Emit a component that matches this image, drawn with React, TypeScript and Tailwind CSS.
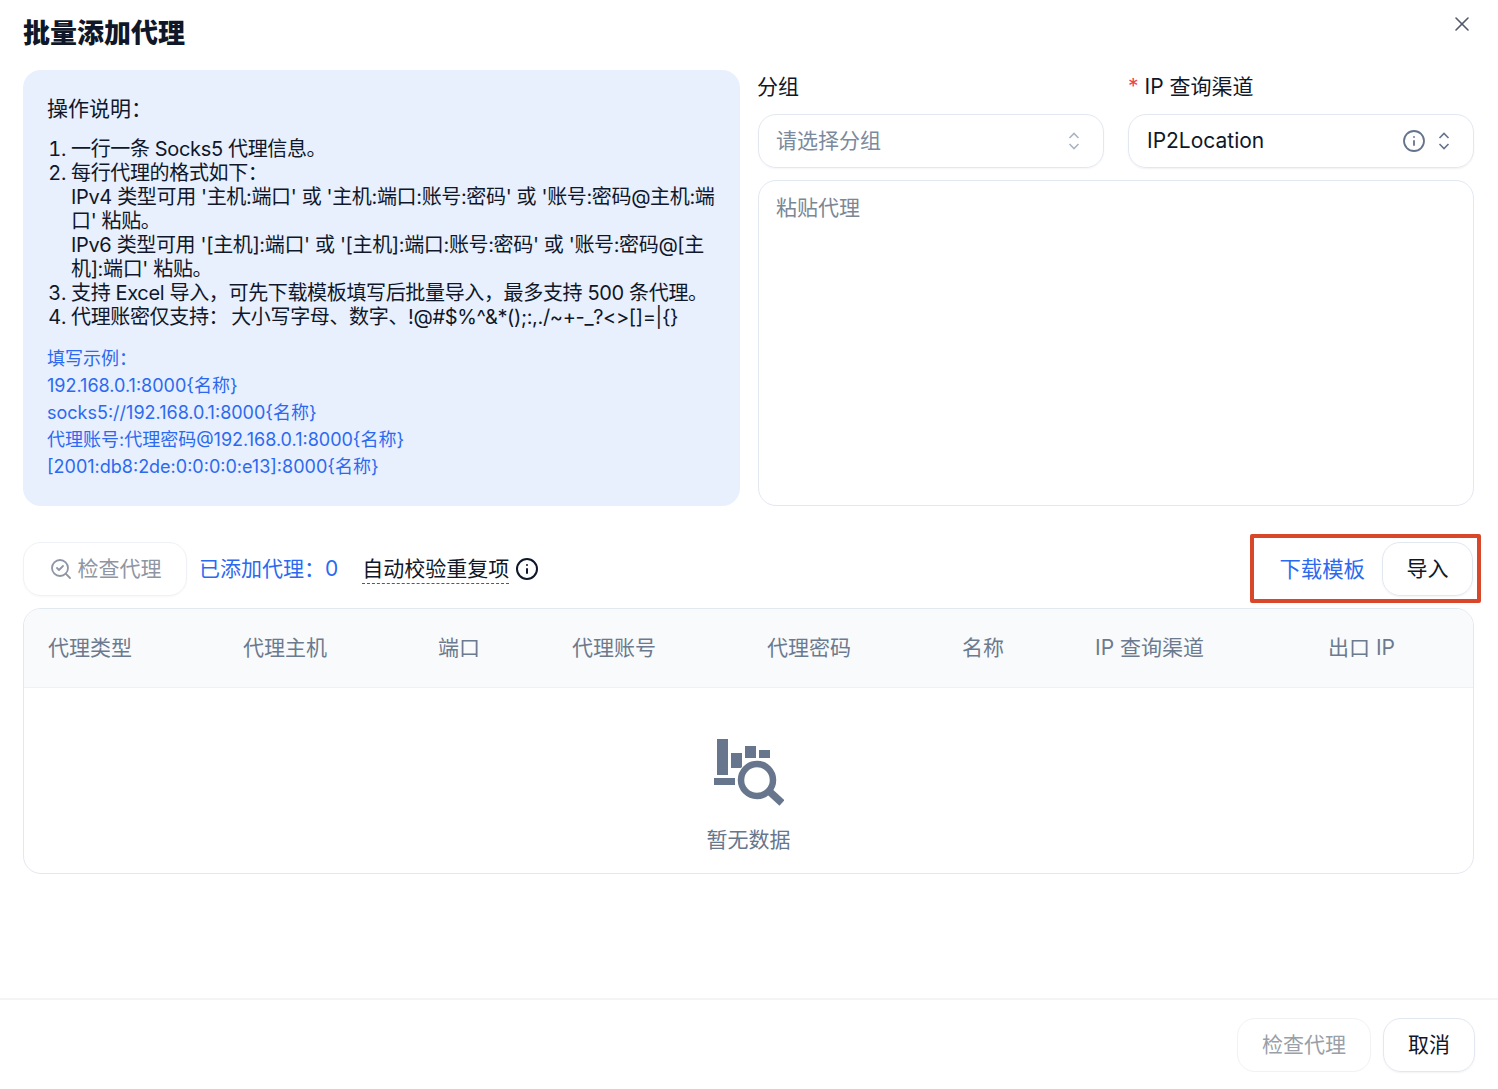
import { X, Info, SearchCheck } from 'lucide-react';

const COMMA = '\uFF0C';
const COLON = '\uFF1A';

const columns = ['代理类型', '代理主机', '端口', '代理账号', '代理密码', '名称', 'IP 查询渠道', '出口 IP'];

const examples = [
  `填写示例${COLON}`,
  '192.168.0.1:8000{名称}',
  'socks5://192.168.0.1:8000{名称}',
  '代理账号:代理密码@192.168.0.1:8000{名称}',
  '[2001:db8:2de:0:0:0:0:e13]:8000{名称}',
];

function UpDown({ className }: { className: string }) {
  return (
    <svg width="14" height="20" viewBox="0 0 14 20" fill="none" stroke="currentColor" strokeWidth="1.6" className={className}>
      <path d="M2.5 7 7 2.5 11.5 7" />
      <path d="M2.5 13 7 17.5 11.5 13" />
    </svg>
  );
}

function EmptyIcon() {
  return (
    <svg width="70" height="67" viewBox="0 0 70 67" fill="#67768d">
      <rect x="3" y="0" width="11" height="36" />
      <rect x="0" y="39" width="21" height="7" />
      <rect x="17" y="14" width="11" height="15" />
      <rect x="31" y="7" width="11" height="12" />
      <rect x="45" y="11" width="11" height="8" />
      <circle cx="43" cy="41" r="20" fill="#fff" />
      <circle cx="43" cy="41" r="16" fill="#fff" stroke="#67768d" strokeWidth="6.5" />
      <path d="M56 53 68 64" stroke="#67768d" strokeWidth="7.5" />
    </svg>
  );
}

export default function App() {
  return (
    <div className="h-[1089px] flex flex-col bg-white text-[21px] text-[#0f1729] font-['Inter','Noto_Sans_CJK_SC',sans-serif] overflow-hidden">
      <div className="flex-1 pl-[23px] pr-[24px]">
        <div className="h-[70px] flex items-start justify-between">
          <h1 className="mt-[15px] text-[27px] leading-[38px] font-black">批量添加代理</h1>
          <button className="mt-[12px] text-[#525a68]">
            <X size={24} strokeWidth={1.6} />
          </button>
        </div>

        <div className="flex gap-[18px] h-[436px]">
          <div className="w-[717px] shrink-0 rounded-[18px] bg-[#e8effd] pl-[24px] pr-[22px] pt-[24px]">
            <p className="leading-[30px]">操作说明{COLON}</p>
            <ol className="mt-[13px] list-decimal pl-[24px] text-[20px] leading-[24px] tracking-[-0.35px]">
              <li>一行一条 Socks5 代理信息。</li>
              <li>
                每行代理的格式如下{COLON}
                <br />
                IPv4 类型可用 '主机:端口' 或 '主机:端口:账号:密码' 或 '账号:密码@主机:端口' 粘贴。
                <br />
                IPv6 类型可用 '[主机]:端口' 或 '[主机]:端口:账号:密码' 或 '账号:密码@[主机]:端口' 粘贴。
              </li>
              <li>支持 Excel 导入{COMMA}可先下载模板填写后批量导入{COMMA}最多支持 500 条代理。</li>
              <li>
                代理账密仅支持{COLON}
                <span className="ml-[3px]">大小写字母、数字、!@#$%^&amp;*();:,./~+-_?&lt;&gt;[]=|{'{}'}</span>
              </li>
            </ol>
            <div className="mt-[16px] text-[18px] leading-[27px] text-[#2b6af0]">
              {examples.map((line) => (
                <p key={line}>{line}</p>
              ))}
            </div>
          </div>

          <div className="flex-1 flex flex-col">
            <div className="flex gap-[24px]">
              <div className="flex-1">
                <label className="block h-[44px] leading-[34px] -ml-[1px]">分组</label>
                <div className="h-[54px] flex items-center justify-between rounded-[18px] border border-[#e2e8f0] pl-[17px] pr-[22px] shadow-[0_1px_2px_rgba(15,23,42,0.04)]">
                  <span className="text-[#7c8a9e]">请选择分组</span>
                  <UpDown className="text-[#aab4c3]" />
                </div>
              </div>
              <div className="flex-1">
                <label className="block h-[44px] leading-[34px]">
                  <span className="text-[#ef4444] mr-[6px]">*</span>IP 查询渠道
                </label>
                <div className="h-[54px] flex items-center rounded-[18px] border border-[#e2e8f0] pl-[18px] pr-[22px] shadow-[0_1px_2px_rgba(15,23,42,0.06)]">
                  <span className="flex-1">IP2Location</span>
                  <Info size={24} strokeWidth={1.8} className="text-[#64748b]" />
                  <UpDown className="ml-[11px] text-[#64748b]" />
                </div>
              </div>
            </div>
            <div className="mt-[12px] flex-1 rounded-[18px] border border-[#e2e8f0] pl-[17px] pt-[11px] text-[#7c8794]">
              粘贴代理
            </div>
          </div>
        </div>

        <div className="mt-[36px] h-[54px] flex items-center">
          <button className="h-[54px] w-[164px] flex items-center justify-center gap-[5px] rounded-[18px] border border-[#eef1f5] text-[#8f96a3] shadow-[0_1px_2px_rgba(15,23,42,0.03)]">
            <SearchCheck size={24} strokeWidth={1.8} />
            检查代理
          </button>
          <span className="ml-[12px] text-[#2b6af0]">已添加代理{COLON}0</span>
          <span className="ml-[24px] border-b border-dashed border-[#525a68] leading-[29px]">自动校验重复项</span>
          <Info size={24} strokeWidth={2} className="ml-[6px]" />
          <div className="relative ml-auto flex items-center pr-[1px]">
            <span className="mr-[17px] text-[21.4px] text-[#2b6af0]">下载模板</span>
            <button className="h-[54px] w-[91px] rounded-[18px] border border-[#e2e8f0] shadow-[0_1px_2px_rgba(15,23,42,0.05)]">
              导入
            </button>
            <div className="absolute left-[-29px] right-[-7px] top-[-8px] bottom-[-7px] border-[4px] border-[#d9472b] rounded-[2px]" />
          </div>
        </div>

        <div className="mt-[12px] h-[266px] rounded-[18px] border border-[#e2e8f0] overflow-hidden">
          <div className="h-[79px] grid grid-cols-[195px_195px_134px_195px_195px_133px_233px_1fr] items-center pl-[24px] bg-[#f9fafb] border-b border-[#eef1f5] text-[#6b7a8f]">
            {columns.map((col) => (
              <span key={col}>{col}</span>
            ))}
          </div>
          <div className="flex flex-col items-center pt-[51px]">
            <EmptyIcon />
            <span className="mt-[18px] text-[#67768d]">暂无数据</span>
          </div>
        </div>
      </div>

      <div className="h-[91px] border-t-2 border-[#f3f4f6] flex items-start justify-end gap-[12px] pt-[18px] pr-[23px]">
        <button className="h-[54px] w-[134px] rounded-[18px] border border-[#f0f2f6] text-[#9a9fa8]">检查代理</button>
        <button className="h-[54px] w-[92px] rounded-[18px] border border-[#e2e8f0] shadow-[0_1px_2px_rgba(15,23,42,0.05)]">取消</button>
      </div>
    </div>
  );
}
